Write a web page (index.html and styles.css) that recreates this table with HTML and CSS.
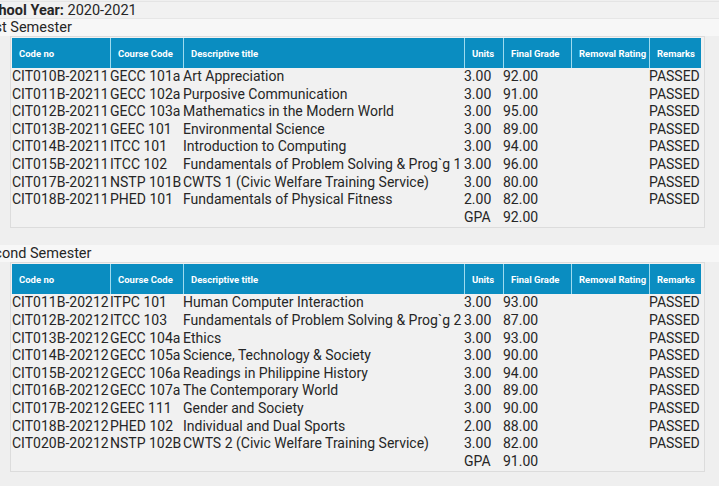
FILE: index.html
```html
<!DOCTYPE html>
<html>
<head>
<meta charset="utf-8">
<link rel="stylesheet" href="styles.css">
</head>
<body>
<div class="page">
  <div class="year"><b>School Year:</b> 2020-2021</div>

  <div class="sem-label">First Semester</div>
  <div class="card">
    <table class="grades">
      <colgroup>
        <col class="c-code"><col class="c-course"><col class="c-title"><col class="c-units"><col class="c-final"><col class="c-removal"><col class="c-remarks">
      </colgroup>
      <thead>
        <tr><th>Code no</th><th>Course Code</th><th>Descriptive title</th><th>Units</th><th>Final Grade</th><th>Removal Rating</th><th>Remarks</th></tr>
      </thead>
      <tbody>
        <tr><td>CIT010B-20211</td><td>GECC 101a</td><td>Art Appreciation</td><td>3.00</td><td>92.00</td><td></td><td>PASSED</td></tr>
        <tr><td>CIT011B-20211</td><td>GECC 102a</td><td>Purposive Communication</td><td>3.00</td><td>91.00</td><td></td><td>PASSED</td></tr>
        <tr><td>CIT012B-20211</td><td>GECC 103a</td><td>Mathematics in the Modern World</td><td>3.00</td><td>95.00</td><td></td><td>PASSED</td></tr>
        <tr><td>CIT013B-20211</td><td>GEEC 101</td><td>Environmental Science</td><td>3.00</td><td>89.00</td><td></td><td>PASSED</td></tr>
        <tr><td>CIT014B-20211</td><td>ITCC 101</td><td>Introduction to Computing</td><td>3.00</td><td>94.00</td><td></td><td>PASSED</td></tr>
        <tr><td>CIT015B-20211</td><td>ITCC 102</td><td>Fundamentals of Problem Solving &amp; Prog`g 1</td><td>3.00</td><td>96.00</td><td></td><td>PASSED</td></tr>
        <tr><td>CIT017B-20211</td><td>NSTP 101B</td><td>CWTS 1 (Civic Welfare Training Service)</td><td>3.00</td><td>80.00</td><td></td><td>PASSED</td></tr>
        <tr><td>CIT018B-20211</td><td>PHED 101</td><td>Fundamentals of Physical Fitness</td><td>2.00</td><td>82.00</td><td></td><td>PASSED</td></tr>
        <tr><td></td><td></td><td></td><td>GPA</td><td>92.00</td><td></td><td></td></tr>
      </tbody>
    </table>
  </div>

  <div class="sem-label sem-second">Second Semester</div>
  <div class="card">
    <table class="grades">
      <colgroup>
        <col class="c-code"><col class="c-course"><col class="c-title"><col class="c-units"><col class="c-final"><col class="c-removal"><col class="c-remarks">
      </colgroup>
      <thead>
        <tr><th>Code no</th><th>Course Code</th><th>Descriptive title</th><th>Units</th><th>Final Grade</th><th>Removal Rating</th><th>Remarks</th></tr>
      </thead>
      <tbody>
        <tr><td>CIT011B-20212</td><td>ITPC 101</td><td>Human Computer Interaction</td><td>3.00</td><td>93.00</td><td></td><td>PASSED</td></tr>
        <tr><td>CIT012B-20212</td><td>ITCC 103</td><td>Fundamentals of Problem Solving &amp; Prog`g 2</td><td>3.00</td><td>87.00</td><td></td><td>PASSED</td></tr>
        <tr><td>CIT013B-20212</td><td>GECC 104a</td><td>Ethics</td><td>3.00</td><td>93.00</td><td></td><td>PASSED</td></tr>
        <tr><td>CIT014B-20212</td><td>GECC 105a</td><td>Science, Technology &amp; Society</td><td>3.00</td><td>90.00</td><td></td><td>PASSED</td></tr>
        <tr><td>CIT015B-20212</td><td>GECC 106a</td><td>Readings in Philippine History</td><td>3.00</td><td>94.00</td><td></td><td>PASSED</td></tr>
        <tr><td>CIT016B-20212</td><td>GECC 107a</td><td>The Contemporary World</td><td>3.00</td><td>89.00</td><td></td><td>PASSED</td></tr>
        <tr><td>CIT017B-20212</td><td>GEEC 111</td><td>Gender and Society</td><td>3.00</td><td>90.00</td><td></td><td>PASSED</td></tr>
        <tr><td>CIT018B-20212</td><td>PHED 102</td><td>Individual and Dual Sports</td><td>2.00</td><td>88.00</td><td></td><td>PASSED</td></tr>
        <tr><td>CIT020B-20212</td><td>NSTP 102B</td><td>CWTS 2 (Civic Welfare Training Service)</td><td>3.00</td><td>82.00</td><td></td><td>PASSED</td></tr>
        <tr><td></td><td></td><td></td><td>GPA</td><td>91.00</td><td></td><td></td></tr>
      </tbody>
    </table>
  </div>
</div>
</body>
</html>
```

FILE: styles.css
```css
html, body {
  margin: 0;
  padding: 0;
  background: #efefef;
  overflow: hidden;
}

body {
  font-family: Roboto, "Liberation Sans", Arial, sans-serif;
  font-size: 14px;
  color: #262626;
  width: 719px;
  height: 486px;
}

.page {
  margin-left: -22px;
  padding-top: 1px;
}

.year {
  height: 16px;
  line-height: 17px;
  padding-left: 4px;
  font-size: 14.5px;
  background: #f1f1f1;
  border-top: 1px solid #e4e4e4;
  border-bottom: 1px solid #e6e6e6;
}

.year b {
  font-weight: 700;
}

.sem-label {
  height: 17px;
  line-height: 17px;
  font-size: 14.5px;
  background: #f7f7f7;
}

.sem-second {
  margin-top: 17px;
  padding-left: 0;
}

.card {
  margin-left: 32px;
  width: 691px;
  padding: 1px 1px 1px 1px;
  border: 1px solid #dcdcdc;
  background: #f1f1f1;
}

.grades {
  table-layout: fixed;
  border-collapse: separate;
  border-spacing: 0;
  width: 689px;
}

.c-code { width: 98px; }
.c-course { width: 73px; }
.c-title { width: 281px; }
.c-units { width: 39px; }
.c-final { width: 68px; }
.c-removal { width: 78px; }
.c-remarks { width: 52px; }

.grades th {
  height: 30px;
  padding: 0 0 0 7px;
  background: #0a8dc1;
  color: #ffffff;
  font-size: 9.5px;
  font-weight: 700;
  text-align: left;
  white-space: nowrap;
  border-left: 1px solid #9edbef;
  box-sizing: border-box;
}

.grades th:first-child {
  border-left: none;
}

.grades td {
  padding: 0;
  height: 17.6px;
  line-height: 17.6px;
  white-space: nowrap;
  overflow: visible;
  vertical-align: middle;
}
```
